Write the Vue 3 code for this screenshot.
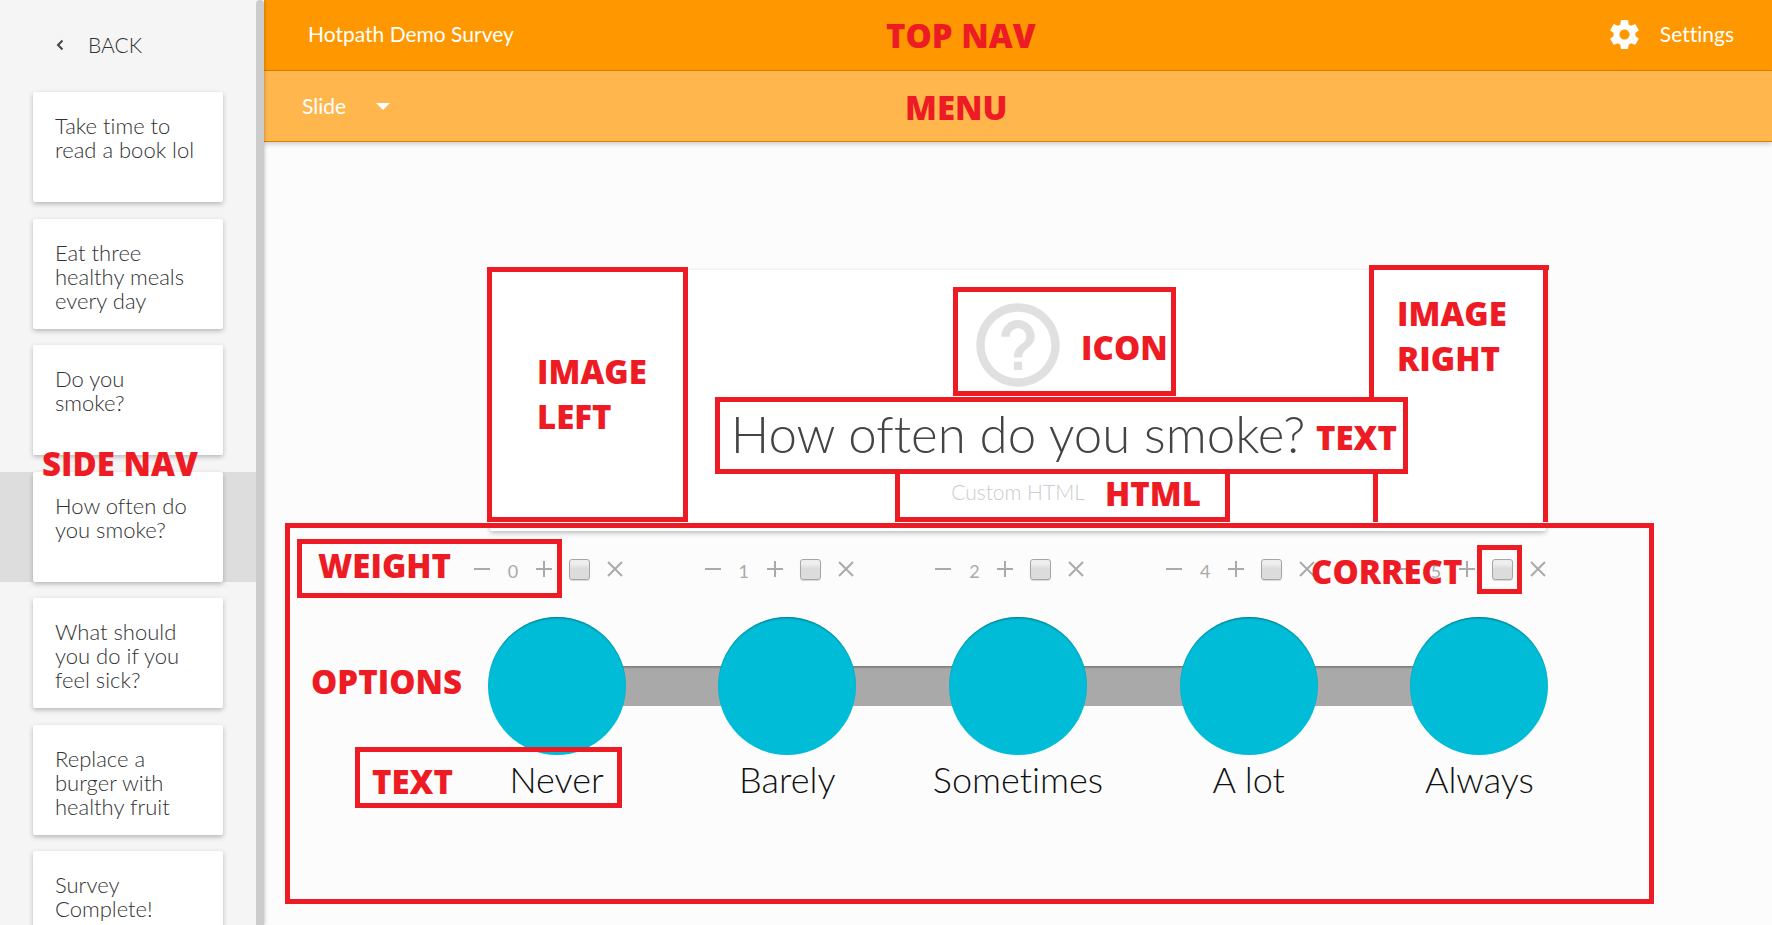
<script setup>
import { ref } from 'vue'

const slides = ref([
  'Take time to read a book lol',
  'Eat three healthy meals every day',
  'Do you smoke?',
  'How often do you smoke?',
  'What should you do if you feel sick?',
  'Replace a burger with healthy fruit',
  'Survey Complete!',
])
const active = ref(3)

const options = ref([
  { text: 'Never', weight: 0, correct: false },
  { text: 'Barely', weight: 1, correct: false },
  { text: 'Sometimes', weight: 2, correct: false },
  { text: 'A lot', weight: 4, correct: false },
  { text: 'Always', weight: 5, correct: false },
])

// Markup boxes: x, y, width, height and the sides that are left open
const boxes = [
  { x: 487, y: 267, w: 201, h: 255 },
  { x: 1369, y: 265, w: 180, h: 132, open: 'open-right open-bottom' },
  { x: 1373, y: 474, w: 12, h: 48, open: 'open-right open-bottom open-top' },
  { x: 1536, y: 265, w: 12, h: 257, open: 'open-left open-bottom open-top' },
  { x: 953, y: 287, w: 223, h: 109 },
  { x: 895, y: 469, w: 335, h: 53 },
  { x: 715, y: 397, w: 693, h: 77 },
  { x: 285, y: 523, w: 1369, h: 381 },
  { x: 297, y: 539, w: 265, h: 59 },
  { x: 1477, y: 545, w: 45, h: 49 },
  { x: 355, y: 747, w: 267, h: 61 },
]

const notes = [
  { x: 886, y: 13, text: 'TOP NAV' },
  { x: 905, y: 85, text: 'MENU' },
  { x: 42, y: 441, text: 'SIDE NAV' },
  { x: 537, y: 349, text: 'IMAGE\nLEFT' },
  { x: 1397, y: 291, text: 'IMAGE\nRIGHT' },
  { x: 1081, y: 325, text: 'ICON' },
  { x: 1316, y: 415, text: 'TEXT' },
  { x: 1105, y: 471, text: 'HTML' },
  { x: 318, y: 543, text: 'WEIGHT' },
  { x: 1311, y: 549, text: 'CORRECT' },
  { x: 311, y: 659, text: 'OPTIONS' },
  { x: 372, y: 759, text: 'TEXT' },
]

function boxStyle(b) {
  return { left: b.x + 'px', top: b.y + 'px', width: b.w + 'px', height: b.h + 'px' }
}
function noteStyle(n) {
  return { left: n.x + 'px', top: n.y + 'px' }
}
</script>

<template>
  <div class="app">
    <nav class="sidebar" aria-label="Slides">
      <div class="sidebar-body">
        <a class="back" href="#">
          <svg class="chevron" viewBox="0 0 8 12" aria-hidden="true"><path d="M6.5 1.5 2 6l4.5 4.5" /></svg>
          BACK
        </a>
        <ul class="slides">
          <li v-for="(s, i) in slides" :key="i" :class="{ active: i === active }">
            <button class="slide-card" type="button" @click="active = i">{{ s }}</button>
          </li>
        </ul>
      </div>
      <div class="scroll-thumb"></div>
    </nav>

    <div class="content">
      <header class="topnav">
        <span>Hotpath Demo Survey</span>
        <button class="bar-button settings" type="button">
          <svg class="gear" viewBox="0 0 24 24" aria-hidden="true">
            <path d="M19.43 12.98c.04-.32.07-.64.07-.98s-.03-.66-.07-.98l2.11-1.65c.19-.15.24-.42.12-.64l-2-3.46c-.12-.22-.39-.3-.61-.22l-2.49 1c-.52-.4-1.08-.73-1.69-.98l-.38-2.65C14.46 2.18 14.25 2 14 2h-4c-.25 0-.46.18-.49.42l-.38 2.65c-.61.25-1.17.59-1.69.98l-2.49-1c-.23-.09-.49 0-.61.22l-2 3.46c-.13.22-.07.49.12.64l2.11 1.65c-.04.32-.07.65-.07.98s.03.66.07.98l-2.11 1.65c-.19.15-.24.42-.12.64l2 3.46c.12.22.39.3.61.22l2.49-1c.52.4 1.08.73 1.69.98l.38 2.65c.03.24.24.42.49.42h4c.25 0 .46-.18.49-.42l.38-2.65c.61-.25 1.17-.59 1.69-.98l2.49 1c.23.09.49 0 .61-.22l2-3.46c.12-.22.07-.49-.12-.64l-2.11-1.65zM12 15.5c-1.93 0-3.5-1.57-3.5-3.5s1.57-3.5 3.5-3.5 3.5 1.57 3.5 3.5-1.57 3.5-3.5 3.5z" />
          </svg>
          Settings
        </button>
      </header>
      <div class="menubar">
        <button class="bar-button" type="button" aria-haspopup="menu">
          Slide
          <svg class="caret" viewBox="0 0 14 7" aria-hidden="true"><path d="M0 0h14L7 7z" /></svg>
        </button>
      </div>

      <main class="stage">
        <section class="question">
          <svg class="help" viewBox="0 0 24 24" aria-hidden="true">
            <path d="M11 18h2v-2h-2v2zm1-16C6.48 2 2 6.48 2 12s4.48 10 10 10 10-4.48 10-10S17.52 2 12 2zm0 18c-4.41 0-8-3.59-8-8s3.59-8 8-8 8 3.59 8 8-3.59 8-8 8zm0-14c-2.21 0-4 1.79-4 4h2c0-1.1.9-2 2-2s2 .9 2 2c0 2-3 1.75-3 5h2c0-2.25 3-2.5 3-5 0-2.21-1.79-4-4-4z" />
          </svg>
          <h1>How often do you smoke?</h1>
          <p>Custom HTML</p>
        </section>

        <section class="options">
          <div v-for="o in options" :key="o.text" class="option">
            <div class="tools">
              <button type="button" aria-label="Decrease weight" @click="o.weight--">
                <svg viewBox="0 0 16 16"><path d="M0 8h16" /></svg>
              </button>
              <span class="weight">{{ o.weight }}</span>
              <button type="button" aria-label="Increase weight" @click="o.weight++">
                <svg viewBox="0 0 16 16"><path d="M0 8h16M8 0v16" /></svg>
              </button>
              <input v-model="o.correct" class="tick" type="checkbox" :aria-label="o.text + ' is correct'" />
              <button type="button" aria-label="Remove option">
                <svg viewBox="0 0 16 16"><path d="M1 1l14 14M15 1 1 15" /></svg>
              </button>
            </div>
            <div class="track">
              <button class="dot" type="button" :aria-label="o.text"></button>
            </div>
            <span class="option-text">{{ o.text }}</span>
          </div>
        </section>
      </main>
    </div>

    <div class="markup">
      <div v-for="(b, i) in boxes" :key="'b' + i" class="box" :class="b.open" :style="boxStyle(b)"></div>
      <span v-for="(n, i) in notes" :key="'n' + i" class="note" :style="noteStyle(n)">{{ n.text }}</span>
    </div>
  </div>
</template>

<style>
body {
  margin: 0;
}
</style>

<style scoped>
.app {
  position: relative;
  display: flex;
  height: 100vh;
  overflow: hidden;
  background: #fcfcfc;
  font-family: Lato, "Open Sans", sans-serif;
  font-size: 21px;
  line-height: 24px;
  font-weight: 300;
  font-variant-ligatures: none;
  color: #333;
}
button {
  font: inherit;
  font-variant-ligatures: none;
  color: inherit;
  border: 0;
  padding: 0;
  background: none;
  cursor: pointer;
}
.sidebar {
  display: flex;
  flex: none;
  width: 264px;
  background: #f5f5f5;
  box-shadow: 0 0 4px rgba(0, 0, 0, 0.3);
  z-index: 2;
}
.sidebar-body {
  flex: 1;
  overflow: hidden;
}
.scroll-thumb {
  width: 8px;
  background: #ccc;
  border-radius: 4px 4px 0 0;
}
.back {
  display: flex;
  align-items: center;
  gap: 24px;
  height: 90px;
  padding: 0 0 2px 56px;
  color: #333;
  text-decoration: none;
}
.chevron {
  width: 8px;
  height: 12px;
  fill: none;
  stroke: #444;
  stroke-width: 2;
}
.slides {
  list-style: none;
  margin: 0;
  padding: 0;
}
.slides li {
  padding: 0 33px;
  margin-bottom: 17px;
}
.slides li:nth-child(even) {
  margin-bottom: 16px;
}
.slides .active {
  background: #ddd;
}
.slide-card {
  display: flex;
  width: 100%;
  height: 110px;
  padding: 22px 26px 0 22px;
  background: #fff;
  border-radius: 2px;
  box-shadow: 0 2px 5px rgba(0, 0, 0, 0.26);
  font-size: 22px;
  text-align: left;
}
.content {
  flex: 1;
  min-width: 0;
  display: flex;
  flex-direction: column;
}
.topnav,
.menubar {
  box-sizing: border-box;
  display: flex;
  align-items: center;
  justify-content: space-between;
  flex: none;
  height: 71px;
  border-bottom: 1px solid #d98200;
  color: #fff;
  font-weight: 400;
}
.topnav {
  padding: 0 38px 2px 44px;
  background: #ff9800;
}
.menubar {
  padding: 0 38px;
  background: #ffb74d;
  box-shadow: 0 2px 5px rgba(0, 0, 0, 0.2);
}
.bar-button {
  display: flex;
  align-items: center;
  gap: 30px;
}
.settings {
  gap: 18px;
}
.gear {
  width: 35px;
  height: 35px;
  fill: #fff;
}
.caret {
  width: 14px;
  height: 7px;
  fill: #fff;
}
.stage {
  flex: 1;
  display: flex;
  flex-direction: column;
  align-items: center;
  padding-top: 128px;
}
.question {
  box-sizing: border-box;
  width: 70%;
  height: 261px;
  padding-top: 25px;
  display: flex;
  flex-direction: column;
  align-items: center;
  background: #fff;
  border-radius: 2px;
  box-shadow: 0 2px 5px rgba(0, 0, 0, 0.26);
}
.help {
  width: 100px;
  height: 100px;
  fill: #e0e0e0;
}
h1 {
  margin: 7px 0 14px;
  font-size: 51px;
  line-height: 64px;
  font-weight: 300;
  color: #444;
}
p {
  margin: 0;
  color: #ccc;
}
.options {
  display: grid;
  grid-template-columns: repeat(5, 1fr);
  width: 76.5%;
  margin-top: 26px;
}
.option {
  display: flex;
  flex-direction: column;
  align-items: center;
}
.tools {
  display: flex;
  align-items: center;
  gap: 17px;
  height: 24px;
  padding-right: 16px;
  color: #aaa;
}
.tools button {
  display: flex;
}
.tools svg {
  width: 16px;
  height: 16px;
  fill: none;
  stroke: #aaa;
  stroke-width: 2;
}
.weight {
  width: 12px;
  padding-top: 4px;
  font-size: 18px;
  font-weight: 400;
  text-align: center;
}
.tick {
  appearance: none;
  box-sizing: border-box;
  width: 21px;
  height: 21px;
  margin: 0;
  border: 1px solid #a6a6a6;
  border-radius: 3px;
  background: linear-gradient(#eee 20%, #dcdcdc 45%);
  box-shadow: 0 1px 1px rgba(0, 0, 0, 0.15);
}
.track {
  position: relative;
  display: flex;
  justify-content: center;
  width: 100%;
  margin-top: 36px;
}
.track::before {
  content: "";
  position: absolute;
  top: 49px;
  left: 0;
  right: -1px;
  height: 40px;
  background: linear-gradient(#757575, #a9a9a9 3px);
}
.option:first-child .track::before {
  left: 50%;
}
.option:last-child .track::before {
  right: 50%;
}
.dot {
  position: relative;
  z-index: 1;
  width: 138px;
  height: 138px;
  border-radius: 50%;
  background: #00bcd7;
  box-shadow: inset 0 2px 2px -1px rgba(0, 0, 0, 0.4);
}
.option-text {
  margin-top: 2px;
  font-size: 36px;
  line-height: 44px;
  color: #111;
}
.markup {
  position: absolute;
  inset: 0;
  z-index: 3;
  pointer-events: none;
}
.box {
  position: absolute;
  box-sizing: border-box;
  border: 5px solid #ed1c24;
}
.open-top {
  border-top: 0;
}
.open-right {
  border-right: 0;
}
.open-bottom {
  border-bottom: 0;
}
.open-left {
  border-left: 0;
}
.note {
  position: absolute;
  white-space: pre;
  font-family: "Open Sans", "Noto Sans", sans-serif;
  font-size: 33px;
  line-height: 45px;
  font-weight: 800;
  color: #ed1c24;
}
</style>
